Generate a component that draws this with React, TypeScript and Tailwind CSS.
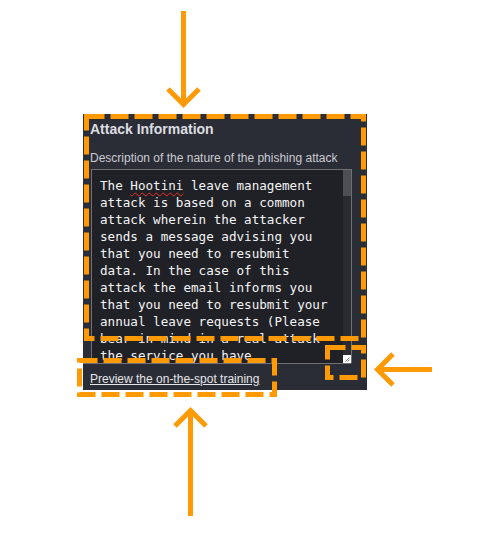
import React from "react";

const ORANGE = "#ff9a05";

const lines = [
  "attack is based on a common",
  "attack wherein the attacker",
  "sends a message advising you",
  "that you need to resubmit",
  "data. In the case of this",
  "attack the email informs you",
  "that you need to resubmit your",
  "annual leave requests (Please",
  "bear in mind in a real attack",
  "the service you have",
];

function Callouts() {
  const dash = { stroke: ORANGE, strokeWidth: 5, fill: "none", strokeDasharray: "18 6" };
  const arrow = { stroke: ORANGE, strokeWidth: 5, fill: "none", strokeLinecap: "butt" as const };
  return (
    <svg className="absolute inset-0 pointer-events-none" width={477} height={533} viewBox="0 0 477 533">
      {/* dashed frames */}
      <rect x={86.5} y={116.5} width={277} height={222} {...dash} />
      <rect x={327.5} y={347.5} width={36} height={30} {...dash} />
      <rect x={79.5} y={360.5} width={195} height={34} {...dash} />
      {/* arrows */}
      <line x1={183.5} y1={11} x2={183.5} y2={103} {...arrow} />
      <polyline points="168,89 183.5,104.5 199,89" {...arrow} />
      <line x1={379} y1={369.5} x2={432} y2={369.5} {...arrow} />
      <polyline points="393,354 377.5,369.5 393,385" {...arrow} />
      <line x1={190.5} y1={412} x2={190.5} y2={516} {...arrow} />
      <polyline points="175,426 190.5,410.5 206,426" {...arrow} />
    </svg>
  );
}

export default function App() {
  return (
    <div className="relative w-[477px] h-[533px] bg-white overflow-hidden" style={{ fontFamily: '"Liberation Sans", Arial, sans-serif' }}>
      <div className="pt-[114px] pl-[83px]">
        <div className="w-[284px] h-[276px] bg-[#2b2d36] flex flex-col">
          <div className="pl-[7px] pt-[7px]">
            <h3 className="text-[14px] leading-[16px] font-bold text-[#dcdde1]">Attack Information</h3>
            <p className="mt-[14px] text-[12px] leading-[14px] text-[#c9cbd1]">
              Description of the nature of the phishing attack
            </p>
          </div>

          {/* text area */}
          <div className="ml-[8px] mt-[4px] w-[261px] h-[195px] relative bg-[#202127] border-t border-x border-[#6f7075] overflow-hidden">
            <div
              className="pl-[8px] pt-[7px] text-[12.6px] leading-[17px] text-[#f4f4f4] whitespace-pre"
              style={{ fontFamily: '"DejaVu Sans Mono", "Liberation Mono", monospace' }}
            >
              <div>
                The <span className="underline decoration-wavy decoration-[#e8302c] underline-offset-[2px] decoration-1">Hootini</span> leave management
              </div>
              {lines.map((l, i) => (
                <div key={i}>{l}</div>
              ))}
            </div>
            {/* scrollbar */}
            <div className="absolute top-0 right-0 w-[8px] h-full bg-[#2a2b30]">
              <div className="h-[26px] bg-[#4e4f54]" />
            </div>
            {/* resize grip */}
            <div className="absolute right-0 bottom-0 w-[8px] h-[8px] bg-white flex items-end justify-end p-px">
              <svg width={5} height={5} viewBox="0 0 5 5">
                <line x1={0.5} y1={4.5} x2={4.5} y2={0.5} stroke="#555" strokeWidth={0.8} />
                <line x1={2.5} y1={4.5} x2={4.5} y2={2.5} stroke="#555" strokeWidth={0.8} />
              </svg>
            </div>
          </div>

          <div className="mr-[16px] border-t border-[#6f7075] pl-[7px] pt-[2px]">
            <a href="#" className="text-[12px] leading-[14px] text-[#e4e5e8] underline">
              Preview the on-the-spot training
            </a>
          </div>
        </div>
      </div>
      <Callouts />
    </div>
  );
}
